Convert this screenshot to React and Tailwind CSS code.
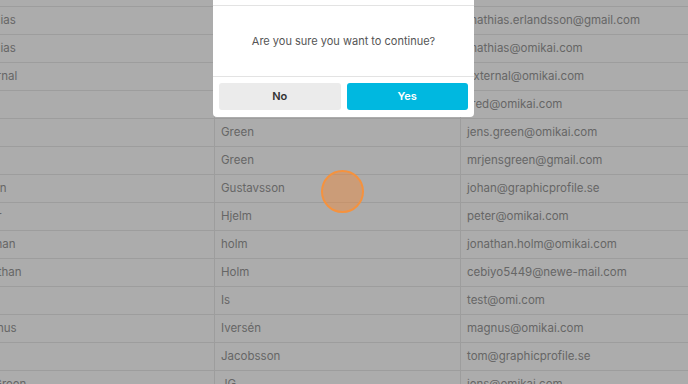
const rows = [
  { first: "Erik", last: "", email: "" },
  { first: "Mathias", last: "Erlandsson", email: "mathias.erlandsson@gmail.com" },
  { first: "Mathias", last: "Erlandsson", email: "mathias@omikai.com" },
  { first: "External", last: "External", email: "external@omikai.com" },
  { first: "Fred", last: "Fredriksson", email: "fred@omikai.com" },
  { first: "Jens", last: "Green", email: "jens.green@omikai.com" },
  { first: "Jens", last: "Green", email: "mrjensgreen@gmail.com" },
  { first: "Johan", last: "Gustavsson", email: "johan@graphicprofile.se" },
  { first: "Peter", last: "Hjelm", email: "peter@omikai.com" },
  { first: "Jonathan", last: "holm", email: "jonathan.holm@omikai.com", indent: "-ml-[35px]" },
  { first: "Jonathan", last: "Holm", email: "cebiyo5449@newe-mail.com", indent: "-ml-[29px]" },
  { first: "Test", last: "Is", email: "test@omi.com" },
  { first: "Magnus", last: "Iversén", email: "magnus@omikai.com" },
  { first: "Tom", last: "Jacobsson", email: "tom@graphicprofile.se" },
  { first: "Jens Green", last: "JG", email: "jens@omikai.com", indent: "-ml-[36px]" },
];

const App = () => {
  return (
    <div className="relative w-[688px] h-[384px] overflow-hidden bg-[#acacac] text-[11.5px] text-[#666666]" style={{ fontFamily: "Inter, 'Noto Sans', sans-serif" }}>
      <div className="-mt-[21px] flex flex-col">
        {rows.map((row, i) => (
          <div key={i} className="flex h-[28px] border-b border-[#9d9d9d] shrink-0">
            <div className="w-[215px] shrink-0 border-r border-[#9d9d9d] overflow-hidden flex items-center">
              <span className={`whitespace-nowrap ${row.indent ?? "-ml-[27px]"}`}>{row.first}</span>
            </div>
            <div className="w-[246px] shrink-0 border-r border-[#9d9d9d] flex items-center px-[6px]">
              <span className="whitespace-nowrap">{row.last}</span>
            </div>
            <div className="flex-1 flex items-center px-[6px]">
              <span className="whitespace-nowrap">{row.email}</span>
            </div>
          </div>
        ))}
      </div>

      {/* confirm dialog */}
      <div className="absolute left-[213px] top-[-30px] w-[261px] bg-white rounded-b-[4px] flex flex-col">
        <div className="h-[36px] border-b border-[#e3e3e3]" />
        <div className="h-[70px] flex items-center justify-center text-[11px] text-[#555555]">
          Are you sure you want to continue?
        </div>
        <div className="border-t border-[#e3e3e3] flex gap-[6px] px-[6px] pt-[6px] pb-[7px]">
          <button className="flex-1 h-[27px] rounded-[3px] bg-[#ebebeb] text-[11px] font-semibold text-[#333333]">No</button>
          <button className="flex-1 h-[27px] rounded-[3px] bg-[#00b8e0] text-[11px] font-semibold text-white">Yes</button>
        </div>
      </div>

      {/* click marker */}
      <div className="absolute left-[321px] top-[170px] w-[43px] h-[43px] rounded-full border-2 border-[#f5923e] bg-[#f28a3a]/45" />
    </div>
  );
};

export default App;
